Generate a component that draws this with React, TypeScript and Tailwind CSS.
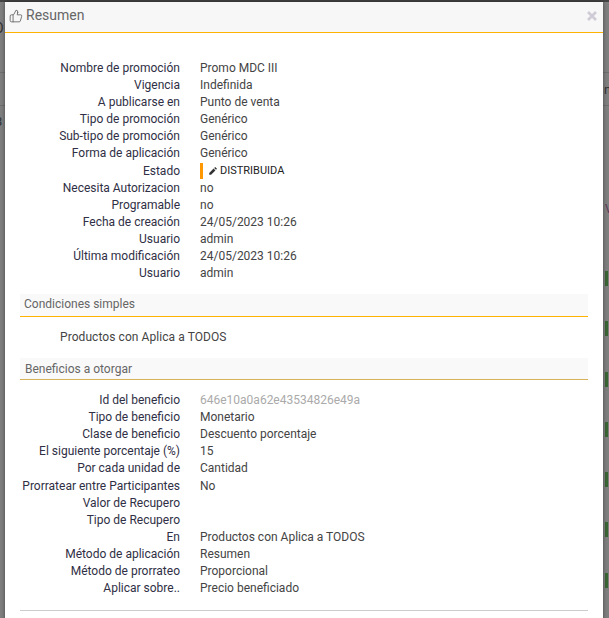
import { ThumbsUp } from "lucide-react";

const FONT = "font-['Roboto','Liberation_Sans',sans-serif]";

const PROMO_ROWS: [string, string][] = [
  ["Nombre de promoción", "Promo MDC III"],
  ["Vigencia", "Indefinida"],
  ["A publicarse en", "Punto de venta"],
  ["Tipo de promoción", "Genérico"],
  ["Sub-tipo de promoción", "Genérico"],
  ["Forma de aplicación", "Genérico"],
  ["Estado", ""],
  ["Necesita Autorizacion", "no"],
  ["Programable", "no"],
  ["Fecha de creación", "24/05/2023 10:26"],
  ["Usuario", "admin"],
  ["Última modificación", "24/05/2023 10:26"],
  ["Usuario", "admin"],
];

const BENEFIT_ROWS: [string, string][] = [
  ["Id del beneficio", "646e10a0a62e43534826e49a"],
  ["Tipo de beneficio", "Monetario"],
  ["Clase de beneficio", "Descuento porcentaje"],
  ["El siguiente porcentaje (%)", "15"],
  ["Por cada unidad de", "Cantidad"],
  ["Prorratear entre Participantes", "No"],
  ["Valor de Recupero", ""],
  ["Tipo de Recupero", ""],
  ["En", "Productos con Aplica a TODOS"],
  ["Método de aplicación", "Resumen"],
  ["Método de prorrateo", "Proporcional"],
  ["Aplicar sobre..", "Precio beneficiado"],
];

const GREEN_BARS = [1, 2, 3, 4, 5, 6, 7];

function Row({ label, value }: { label: string; value: string }) {
  // these two rows are a pixel taller in the original
  const tall = label === "Estado" || label === "Prorratear entre Participantes";
  return (
    <div className={`flex items-center leading-[17px] ${tall ? "h-[18px]" : "h-[17px]"}`}>
      <div className="w-[175px] shrink-0 whitespace-nowrap text-right text-[#2f2f45]">{label}</div>
      <div className="ml-5 whitespace-nowrap text-[#444]">
        {label === "Estado" ? (
          <span className="flex items-center">
            <span className="h-[16px] w-[3px] bg-[#ff9800]" />
            <svg viewBox="0 0 12 12" className="ml-[5px] h-[10px] w-[10px]" fill="#333">
              <path d="M8.6 1.2l2.2 2.2-1.2 1.2-2.2-2.2zM6.7 3.1l2.2 2.2-5.2 5.2H1.5V8.3z" />
            </svg>
            <span className="ml-[2px] pb-px text-[11px] leading-none text-[#222]">DISTRIBUIDA</span>
          </span>
        ) : label === "Id del beneficio" ? (
          <span className="text-[#aaa]">{value}</span>
        ) : (
          value
        )}
      </div>
    </div>
  );
}

export default function App() {
  return (
    <div className={`h-[618px] w-[609px] overflow-hidden bg-[#7f7f7f] text-[12px] ${FONT}`}>
      <div className="h-[2px] bg-[#444]" />
      <div className="flex">
        {/* page behind the overlay, left strip */}
        <div className="w-[5px] shrink-0 overflow-hidden pt-[17px] text-[#333]">
          <div className="-ml-[6px] h-[18px] text-[14px] leading-[18px]">O</div>
          <div className="mt-[35px] h-px bg-[#6e6e6e]" />
          <div className="mt-[32px] h-px bg-[#6e6e6e]" />
          <div className="-ml-[5px] mt-[8px] h-[16px] text-[13px] leading-[16px]">3</div>
        </div>

        {/* modal */}
        <div className="relative h-[640px] w-[598px] shrink-0 bg-white shadow-[0_0_4px_rgba(0,0,0,0.45)]">
          <div className="flex h-[31px] items-center justify-between border-b border-[#ffb300] bg-[#f7f7f7] pb-[3px] pl-[4px] pr-[6px]">
            <div className="flex items-center gap-[3px] text-[14px] text-[#666]">
              <ThumbsUp size={14} strokeWidth={1.5} />
              <span>Resumen</span>
            </div>
            <svg viewBox="0 0 10 10" className="h-[10px] w-[10px]" stroke="#d0ccd6" strokeWidth="2.6" fill="none">
              <path d="M1 1l8 8M9 1l-8 8" />
            </svg>
          </div>

          <div className="px-[15px] pt-[27px]">
            <div className="-ml-[15px]">
              {PROMO_ROWS.map(([label, value], i) => (
                <Row key={i} label={label} value={value} />
              ))}
            </div>

            <div className="mt-[12px] flex h-[23px] items-center border-b border-[#ffb300] bg-[#f9f9f9] pb-[2px] pl-[4px] text-[#666]">
              Condiciones simples
            </div>
            <div className="flex h-[41px] items-center pb-[2px] pl-[40px] tracking-[0.07px] text-[#444]">
              Productos con Aplica a TODOS
            </div>
            <div className="flex h-[22px] items-center border-b border-[#d8b25a] bg-[#f9f9f9] pl-[5px] text-[#666]">
              Beneficios a otorgar
            </div>

            <div className="-ml-[15px] mt-[12px]">
              {BENEFIT_ROWS.map(([label, value], i) => (
                <Row key={i} label={label} value={value} />
              ))}
            </div>
            <div className="mt-[13px] h-px bg-[#ccc]" />
          </div>
        </div>

        {/* page behind the overlay, right strip */}
        <div className="w-[6px] shrink-0 overflow-hidden pt-[70px] text-[#333]">
          <div className="h-px bg-[#6e6e6e]" />
          <div className="ml-px mt-[9px] h-[16px] whitespace-nowrap text-[13px] leading-[16px]">ne</div>
          <div className="mt-[7px] h-px bg-[#6e6e6e]" />
          <div className="ml-[2px] mt-[95px] h-[16px] leading-[16px] text-[#5a3a5a]">V</div>
          <div className="ml-[2px] mt-[54px] flex flex-col gap-[35.3px]">
            {GREEN_BARS.map((bar) => (
              <div key={bar} className="h-[15px] w-[3px] bg-[#3a6535]" />
            ))}
          </div>
        </div>
      </div>
    </div>
  );
}
